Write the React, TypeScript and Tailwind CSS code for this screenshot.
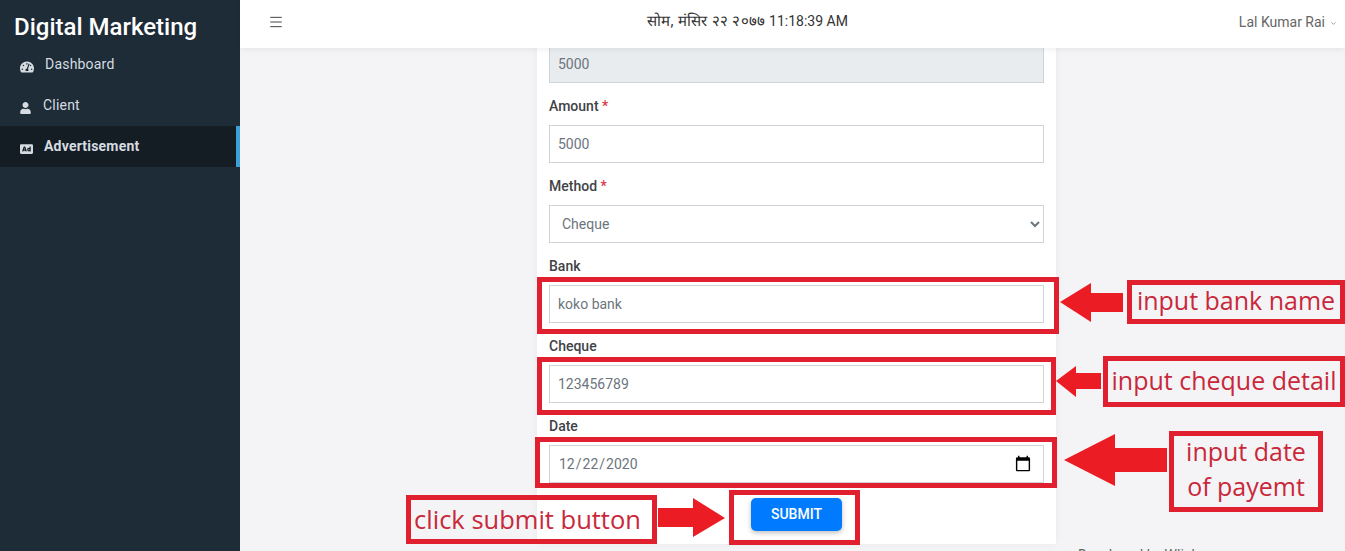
import { FaAd, FaTachometerAlt, FaUser } from "react-icons/fa";
import { Menu, ChevronDown } from "lucide-react";

const inputClass =
  "block w-full h-[38px] border border-[#ced4da] px-2 text-sm text-[#6c757d] outline-none";

function Label({ text, required }: { text: string; required?: boolean }) {
  return (
    <label className="block mb-2 h-[21px] text-sm leading-[21px] font-medium text-[#3f4347]">
      {text}
      {required && <span className="text-[#dc3545]"> *</span>}
    </label>
  );
}

function Callout({ className, children }: { className: string; children?: React.ReactNode }) {
  return (
    <div
      className={`absolute border-[5px] border-[#e0202f] flex items-center justify-center text-center whitespace-nowrap font-['Open_Sans',sans-serif] text-[#c9283a] ${className}`}
    >
      {children}
    </div>
  );
}

function Arrow({ className, points, w, h }: { className: string; points: string; w: number; h: number }) {
  return (
    <svg className={`absolute ${className}`} width={w} height={h} viewBox={`0 0 ${w} ${h}`}>
      <polygon points={points} fill="#ec1c24" />
    </svg>
  );
}

export default function App() {
  return (
    <div className="relative flex h-[551px] w-[1345px] overflow-hidden bg-[#f4f4f6] font-['Roboto',sans-serif]">
      {/* SIDEBAR */}
      <aside className="w-[240px] shrink-0 bg-[#1e2c38] text-[#d5dbe0]">
        <div className="h-[44px] pl-[14px] pt-[10px] text-2xl leading-[34px] font-medium text-white">
          Digital Marketing
        </div>
        <nav className="text-sm tracking-[0.2px]">
          <div className="flex h-[41px] items-center pl-[20px]">
            <FaTachometerAlt className="w-[14px] h-[14px] mt-1" />
            <span className="ml-[11px] -mt-[2px]">Dashboard</span>
          </div>
          <div className="flex h-[41px] items-center pl-[20px]">
            <FaUser className="w-[11px] h-[12px] mt-1" />
            <span className="ml-[12px] -mt-[2px]">Client</span>
          </div>
          <div className="flex h-[41px] items-center border-r-4 border-[#3c9fd6] bg-[#141c24] pl-[20px] font-bold">
            <FaAd className="w-[13px] h-[14px] mt-1" />
            <span className="ml-[11px] -mt-[2px]">Advertisement</span>
          </div>
        </nav>
      </aside>

      {/* MAIN */}
      <div className="flex min-w-0 flex-1 flex-col">
        <header className="relative z-10 flex h-12 shrink-0 items-center bg-white pl-[28px] pr-2 shadow-[0_2px_6px_rgba(0,0,0,0.06)]">
          <Menu className="-mt-1 h-4 w-4 text-[#444]" strokeWidth={1.5} />
          <div className="ml-[363px] -mt-1 w-[200px] text-center text-sm whitespace-nowrap text-[#333]">
            <span className="text-[15px] tracking-[0.3px]">सोम, मंसिर २२ २०७७</span> 11:18:39 AM
          </div>
          <div className="ml-auto -mt-[5px] flex items-center gap-[5px] text-sm text-[#666]">
            Lal Kumar Rai
            <ChevronDown className="mt-1 h-[7px] w-[7px]" />
          </div>
        </header>

        <div className="relative flex-1 overflow-hidden">
          <div className="ml-[297px] -mt-[3px] w-[519px] bg-white px-3 pb-[13px] shadow-[0_0_8px_rgba(0,0,0,0.05)]">
            <input className={`${inputClass} bg-[#e9ecef]`} readOnly value="5000" />
            <div className="mt-[13px]">
              <Label text="Amount" required />
              <input className={`${inputClass} bg-white`} readOnly value="5000" />
            </div>
            <div className="mt-[13px]">
              <Label text="Method" required />
              <select className={`${inputClass} bg-white appearance-auto`} defaultValue="Cheque">
                <option>Cheque</option>
              </select>
            </div>
            <div className="mt-[13px]">
              <Label text="Bank" />
              <input className={`${inputClass} bg-white`} readOnly value="koko bank" />
            </div>
            <div className="mt-[13px]">
              <Label text="Cheque" />
              <input className={`${inputClass} bg-white`} readOnly value="123456789" />
            </div>
            <div className="mt-[13px]">
              <Label text="Date" />
              <input
                className={`${inputClass} bg-white [&::-webkit-calendar-picker-indicator]:m-0 [&::-webkit-calendar-picker-indicator]:mr-[3px] [&::-webkit-calendar-picker-indicator]:h-[18px] [&::-webkit-calendar-picker-indicator]:w-[18px] [&::-webkit-calendar-picker-indicator]:p-0`}
                type="date"
                defaultValue="2020-12-22"
              />
            </div>
            <div className="mt-[15px] flex justify-center">
              <button className="h-[33px] w-[91px] rounded-[5px] bg-[#007bff] pb-[2px] text-sm font-medium text-white shadow-[0_2px_5px_rgba(0,0,0,0.25)]">
                SUBMIT
              </button>
            </div>
          </div>
          <div className="absolute left-[838px] top-[497px] text-sm text-[#666]">Developed by Wlink</div>
        </div>
      </div>

      {/* ANNOTATIONS */}
      <Callout className="left-[537px] top-[277px] h-[57px] w-[522px]" />
      <Callout className="left-[537px] top-[357px] h-[58px] w-[519px]" />
      <Callout className="left-[535px] top-[437px] h-[51px] w-[522px]" />
      <Callout className="left-[729px] top-[490px] h-[55px] w-[131px]" />

      <Callout className="left-[1127px] top-[280px] h-[44px] w-[218px] pb-[2px] text-[25px]">input bank name</Callout>
      <Callout className="left-[1103px] top-[356px] h-[51px] w-[242px] pb-[2px] text-[25px]">input cheque detail</Callout>
      <Callout className="left-[1169px] top-[431px] h-[81px] w-[154px] pb-[6px] text-[25px] leading-[35px]">
        input date
        <br />
        of payemt
      </Callout>
      <Callout className="left-[406px] top-[495px] h-[49px] w-[251px] pr-[8px] text-[25.5px]">click submit button</Callout>

      <Arrow className="left-[1060px] top-[283px]" w={63} h={39} points="0,19 31,0 31,10 63,10 63,29 31,29 31,39" />
      <Arrow className="left-[1056px] top-[366px]" w={45} h={31} points="0,15 20,0 20,7 45,7 45,23 20,23 20,31" />
      <Arrow className="left-[1064px] top-[434px]" w={103} h={52} points="0,26 51,0 51,14 103,14 103,38 51,38 51,52" />
      <Arrow className="left-[658px] top-[498px]" w={67} h={39} points="0,10 35,10 35,0 67,20 35,39 35,29 0,29" />
    </div>
  );
}
